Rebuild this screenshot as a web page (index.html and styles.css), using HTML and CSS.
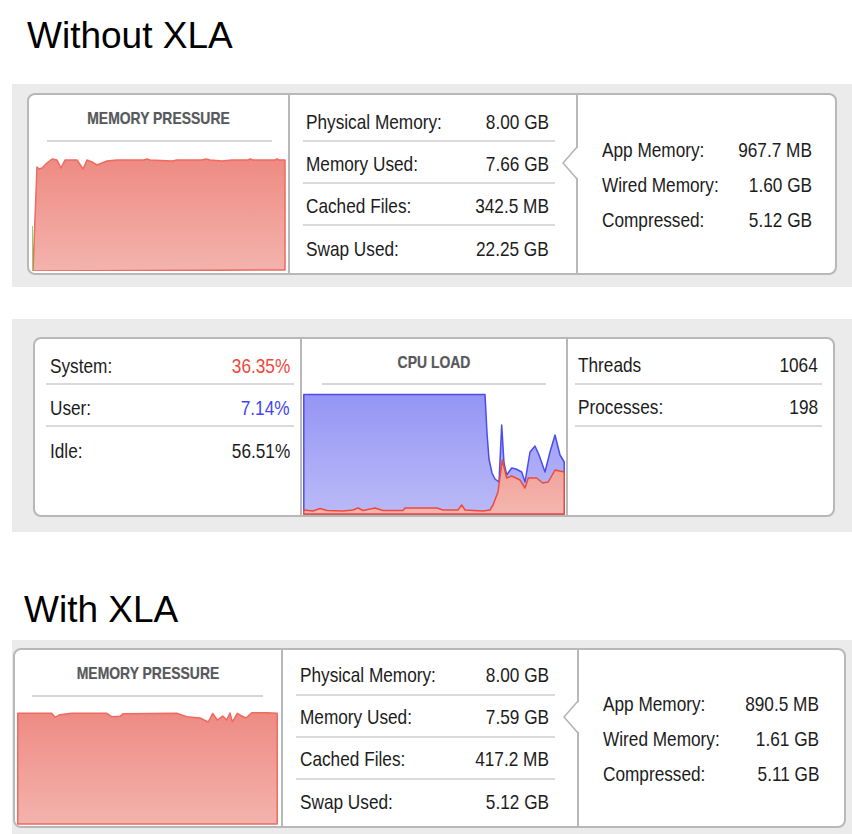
FILE: index.html
```html
<!DOCTYPE html>
<html lang="en">
<head>
<meta charset="utf-8">
<title>Memory and CPU — with and without XLA</title>
<link rel="stylesheet" href="styles.css">
</head>
<body>
<h1 class="title title--top">Without XLA</h1>

<section class="panel panel--m1">
  <div class="card card--m1">
    <div class="col col-chart">
      <div class="chart-head">MEMORY PRESSURE</div>
      <div class="head-rule"></div>
      <svg class="chart chart--m1" viewBox="0 0 254 116" preserveAspectRatio="none">
        <defs>
          <linearGradient id="memfill1" x1="0" y1="0" x2="0" y2="1">
            <stop offset="0" stop-color="#ee8b83"/>
            <stop offset="1" stop-color="#f3b3ad"/>
          </linearGradient>
        </defs>
        <path d="M1,116 L5,12 L7,14 L10,13 L15,8 L20,4 L25,5 L29,13 L33,5 L45,5 L51,14 L55,5 L60,7 L65,10 L75,6 L85,5 L112,5 L115,4 L118,5 L140,6 L145,5 L170,5 L174,4 L178,5 L190,6 L200,5 L216,5 L218,4 L221,5 L243,5 L245,4 L247,5 L253,5 L253,115 Z" fill="url(#memfill1)" stroke="#ef6a5f" stroke-width="1.5" stroke-linejoin="round"/>
        <line x1="0.5" y1="71" x2="0.5" y2="116" stroke="#7fdb5c" stroke-width="1"/>
      </svg>
    </div>
    <div class="col col-stats">
      <div class="row"><span>Physical Memory:</span><span>8.00 GB</span></div>
      <div class="row"><span>Memory Used:</span><span>7.66 GB</span></div>
      <div class="row"><span>Cached Files:</span><span>342.5 MB</span></div>
      <div class="row"><span>Swap Used:</span><span>22.25 GB</span></div>
    </div>
    <div class="col col-detail">
      <svg class="pointer" width="18" height="32" viewBox="0 0 18 32">
        <polygon points="1,16 15,1 18,1 18,31 15,31" fill="#fff"/>
        <polyline points="15,0 1,16 15,32" fill="none" stroke="#b5b5b5" stroke-width="1.6"/>
      </svg>
      <div class="drow"><span>App Memory:</span><span>967.7 MB</span></div>
      <div class="drow"><span>Wired Memory:</span><span>1.60 GB</span></div>
      <div class="drow"><span>Compressed:</span><span>5.12 GB</span></div>
    </div>
  </div>
</section>

<section class="panel panel--cpu">
  <div class="card card--cpu">
    <div class="col col-list col-list--left">
      <div class="row"><span>System:</span><span class="val-sys">36.35%</span></div>
      <div class="row"><span>User:</span><span class="val-user">7.14%</span></div>
      <div class="row"><span>Idle:</span><span>56.51%</span></div>
    </div>
    <div class="col col-cpu">
      <div class="chart-head">CPU LOAD</div>
      <div class="head-rule head-rule--cpu"></div>
      <svg class="chart chart--cpu" viewBox="0 0 262 122" preserveAspectRatio="none">
        <defs>
          <linearGradient id="cpublue" x1="0" y1="0" x2="0" y2="1">
            <stop offset="0" stop-color="#9595f4"/>
            <stop offset="1" stop-color="#babaf8"/>
          </linearGradient>
          <linearGradient id="cpured" x1="0" y1="0" x2="0" y2="1">
            <stop offset="0" stop-color="#f0a097"/>
            <stop offset="1" stop-color="#f4b6b0"/>
          </linearGradient>
        </defs>
        <path d="M0.8,121 L0.8,1.5 L182,1.5 L184,40 L186,66 L189,80 L192,86 L196,89 L198.7,32 L201,70 L203.7,82 L208.7,75 L213,76 L218.7,79 L222,89 L227,59 L232,53 L236,62 L242,79 L247,59 L252,42 L257,62 L261.2,69 L261.2,121 Z" fill="url(#cpublue)" stroke="#4b4bf0" stroke-width="1.5" stroke-linejoin="round"/>
        <path d="M0.8,121 L0.8,117 L10,118 L17,115.5 L24,117.5 L40,118 L50,117 L55,115 L60,117.5 L72,115 L80,117.5 L100,117.5 L102,115 L134,115 L140,117 L155,117 L158.7,112 L162,117 L180,118 L187,117 L190,112 L195,99 L199.3,67 L203.7,85 L208.7,83 L217,87 L222,95 L225.3,85 L233.7,85 L239.7,90 L245.3,89 L252,77 L261.2,79 L261.2,121 Z" fill="url(#cpured)" stroke="#ee4a3c" stroke-width="1.5" stroke-linejoin="round"/>
      </svg>
    </div>
    <div class="col col-list col-list--right">
      <div class="row"><span>Threads</span><span>1064</span></div>
      <div class="row"><span>Processes:</span><span>198</span></div>
    </div>
  </div>
</section>

<h1 class="title title--bottom">With XLA</h1>

<section class="panel panel--m2">
  <div class="card card--m2">
    <div class="col col-chart">
      <div class="chart-head">MEMORY PRESSURE</div>
      <div class="head-rule head-rule--m2"></div>
      <svg class="chart chart--m2" viewBox="0 0 261 113" preserveAspectRatio="none">
        <defs>
          <linearGradient id="memfill2" x1="0" y1="0" x2="0" y2="1">
            <stop offset="0" stop-color="#ee8b83"/>
            <stop offset="1" stop-color="#f3b3ad"/>
          </linearGradient>
        </defs>
        <path d="M0.8,112 L0.8,1.3 L34.7,1.3 L38,5.3 L43,2.7 L54.7,1.3 L89.7,1.3 L94.7,4.7 L103,4.3 L106.3,1.7 L159.7,1.3 L169.7,4.7 L183,6 L191.3,10 L195.7,1.3 L200.3,8 L205.7,4 L209.7,8 L213,1 L215.3,10 L220.3,1.3 L224.7,4 L229,6 L234.7,0.8 L250,0.8 L260.2,1.2 L260.2,112 Z" fill="url(#memfill2)" stroke="#ef6a5f" stroke-width="1.5" stroke-linejoin="round"/>
      </svg>
    </div>
    <div class="col col-stats col-stats--m2">
      <div class="row"><span>Physical Memory:</span><span>8.00 GB</span></div>
      <div class="row"><span>Memory Used:</span><span>7.59 GB</span></div>
      <div class="row"><span>Cached Files:</span><span>417.2 MB</span></div>
      <div class="row"><span>Swap Used:</span><span>5.12 GB</span></div>
    </div>
    <div class="col col-detail col-detail--m2">
      <svg class="pointer pointer--m2" width="18" height="32" viewBox="0 0 18 32">
        <polygon points="1,16 15,1 18,1 18,31 15,31" fill="#fff"/>
        <polyline points="15,0 1,16 15,32" fill="none" stroke="#b5b5b5" stroke-width="1.6"/>
      </svg>
      <div class="drow"><span>App Memory:</span><span>890.5 MB</span></div>
      <div class="drow"><span>Wired Memory:</span><span>1.61 GB</span></div>
      <div class="drow"><span>Compressed:</span><span>5.11 GB</span></div>
    </div>
  </div>
</section>
</body>
</html>
```

FILE: styles.css
```css
html, body {
  margin: 0;
  padding: 0;
  background: #ffffff;
}

body {
  font-family: "Liberation Sans", Arial, sans-serif;
  color: #1c1c1c;
  width: 852px;
  overflow: hidden;
}

.title {
  font-family: "Liberation Sans", Arial, sans-serif;
  font-weight: 400;
  font-size: 37px;
  line-height: 37px;
  margin: 0;
  color: #000;
}

.title--top {
  margin: 17px 0 0 27px;
}

.title--bottom {
  margin: 59px 0 0 24px;
}

/* grey backdrop bands */
.panel {
  background: #ebebeb;
  margin-left: 12px;
}

.panel--m1 {
  margin-top: 30px;
  padding: 9px 15px 12px 15px;
}

.panel--cpu {
  margin-top: 32px;
  padding: 18px 17px 15px 21px;
}

.panel--m2 {
  margin-top: 12px;
  padding: 8px 6px 6px 1px;
}

/* white rounded cards */
.card {
  background: #ffffff;
  border: 2px solid #b8b8b8;
  border-radius: 8px;
  box-sizing: border-box;
  display: grid;
  height: 180px;
  overflow: hidden;
}

.card--m1 {
  height: 182px;
  grid-template-columns: 261px 288px 257px;
}

.card--cpu {
  grid-template-columns: 267px 266px 265px;
}

.card--m2 {
  grid-template-columns: 268px 296px 265px;
}

.col {
  box-sizing: border-box;
  min-width: 0;
}

.col:not(:last-child) {
  border-right: 2px solid #b8b8b8;
}

/* chart columns */
.chart-head {
  text-align: center;
  font-weight: 700;
  font-size: 17px;
  line-height: 20px;
  color: #58595c;
  margin-top: 14px;
  transform: scaleX(0.82);
  text-shadow: 0 0 1px rgba(90, 90, 100, 0.35);
}

.head-rule {
  height: 2px;
  background: #d7d7d7;
  margin: 11px 16px 0 18px;
}

.head-rule--m2 {
  margin: 11px 18px 0 17px;
}

.head-rule--cpu {
  margin: 10px 20px 0 20px;
}

.chart {
  display: block;
}

.chart--m1 {
  width: 254px;
  height: 116px;
  margin: 13px 2px 0 3px;
}

.chart--m2 {
  width: 261px;
  height: 113px;
  margin: 15px 3px 0 2px;
}

.chart--cpu {
  width: 262px;
  height: 122px;
  margin: 8px 1px 0 1px;
}

/* label / value pairs, set in a condensed width */
.row,
.drow {
  display: flex;
  font-size: 21px;
  color: #1c1c1c;
}

.row > span,
.drow > span {
  white-space: nowrap;
}

.row > span:first-child,
.drow > span:first-child {
  flex: 1 1 0;
  min-width: 0;
  transform: scaleX(0.82);
  transform-origin: 0 50%;
}

.row > span:last-child,
.drow > span:last-child {
  flex: none;
  transform: scaleX(0.82);
  transform-origin: 100% 50%;
}

.row {
  align-items: center;
  box-sizing: border-box;
  height: 42px;
}

.col-stats {
  padding: 5px 21px 0 13px;
}

.col-stats--m2 {
  padding: 4px 22px 0 13px;
}

.col-stats .row {
  padding: 3px 6px 0 3px;
}

.col-stats--m2 .row {
  padding: 1px 6px 0 4px;
}

.col-stats .row:not(:last-child),
.col-list--left .row:not(:last-child),
.col-list--right .row {
  border-bottom: 2px solid #dadada;
}

.col-list--left {
  padding: 4px 6px 0 11px;
}

.col-list--left .row {
  padding: 5px 4px 0 4px;
}

.col-list--right {
  padding: 4px 11px 0 7px;
}

.col-list--right .row {
  padding: 3px 4px 0 3px;
}

.val-sys {
  color: #f0473d;
}

.val-user {
  color: #4444f4;
}

/* detail column with the pointer notch */
.col-detail {
  position: relative;
  display: flex;
  flex-direction: column;
  justify-content: center;
  padding: 0 23px 0 24px;
}

.col-detail--m2 {
  padding: 0 25px 0 24px;
}

.drow {
  line-height: 35px;
}

.pointer {
  position: absolute;
  left: -16px;
  top: 52px;
}

.pointer--m2 {
  top: 51px;
}
```
